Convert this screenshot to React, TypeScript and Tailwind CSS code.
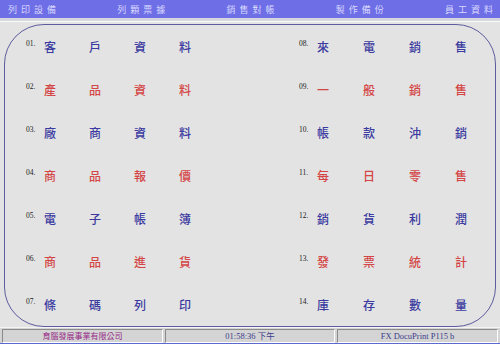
import React from "react";

type Item = { no: string; text: string; red: boolean };

const leftItems: Item[] = [
  { no: "01.", text: "客戶資料", red: false },
  { no: "02.", text: "產品資料", red: true },
  { no: "03.", text: "廠商資料", red: false },
  { no: "04.", text: "商品報價", red: true },
  { no: "05.", text: "電子帳簿", red: false },
  { no: "06.", text: "商品進貨", red: true },
  { no: "07.", text: "條碼列印", red: false },
];

const rightItems: Item[] = [
  { no: "08.", text: "來電銷售", red: false },
  { no: "09.", text: "一般銷售", red: true },
  { no: "10.", text: "帳款沖銷", red: false },
  { no: "11.", text: "每日零售", red: true },
  { no: "12.", text: "銷貨利潤", red: false },
  { no: "13.", text: "發票統計", red: true },
  { no: "14.", text: "庫存數量", red: false },
];

const menu = ["列印設備", "列顆票據", "銷售對帳", "製作備份", "員工資料"];

const cjk = "font-['Noto_Sans_CJK_TC','Noto_Sans_CJK_SC',sans-serif]";

function Entry({ item, gap }: { item: Item; gap: string }) {
  return (
    <div className="flex items-start">
      <span className="w-[18px] font-['Liberation_Serif',serif] text-[7.5px] leading-none text-[#222222]">
        {item.no}
      </span>
      <div className={`flex ${gap}`}>
        {item.text.split("").map((ch, i) => (
          <span
            key={i}
            className={`w-[12px] text-[12px] font-medium leading-[14px] ${cjk} ${
              item.red ? "text-[#d44646]" : "text-[#3a3aa0]"
            }`}
          >
            {ch}
          </span>
        ))}
      </div>
    </div>
  );
}

export default function App() {
  return (
    <div className="flex h-[344px] w-[500px] flex-col overflow-hidden bg-[#e3e3e3]">
      <div className="flex h-[18px] items-center justify-between bg-[#6e6ee6] pl-[8px] pr-[3px]">
        {menu.map((m) => (
          <span
            key={m}
            className={`text-[9px] leading-none tracking-[4px] text-[#d8d8ff] ${cjk}`}
          >
            {m}
          </span>
        ))}
      </div>
      <div className="h-[3px] bg-[#d6d6de]" />
      <div className="h-px bg-[#fafafa]" />

      <div className="px-[4px] pt-[2px]">
        <div className="flex h-[303px] flex-col rounded-[40px] border border-[#5c5c9e]">
          {leftItems.map((item, i) => (
            <div key={item.no} className="flex h-[43px] items-center pt-[1px]">
              <div className="w-[297px] pl-[21px]">
                <Entry item={item} gap="gap-[33px]" />
              </div>
              <div className="-ml-[3px]">
                <Entry item={rightItems[i]} gap="gap-[34px]" />
              </div>
            </div>
          ))}
        </div>
      </div>

      <div className="flex flex-1 flex-col bg-[#d4d4d4]">
        <div className="h-px bg-[#f4f4f4]" />
        <div className="flex flex-1 gap-[2px] px-[2px] pt-[1px]">
          <div className="flex w-[161px] items-center justify-center border border-l-[#8a8a8a] border-t-[#8a8a8a] border-b-white border-r-white">
            <span className={`text-[8px] leading-none text-[#962a86] ${cjk}`}>
              育腦發展事業有限公司
            </span>
          </div>
          <div className="flex w-[170px] items-center justify-center border border-l-[#8a8a8a] border-t-[#8a8a8a] border-b-white border-r-white">
            <span className="font-['Liberation_Serif','Noto_Sans_CJK_TC',serif] text-[8.5px] leading-none text-[#3c3c8c]">
              01:58:36 下午
            </span>
          </div>
          <div className="flex flex-1 items-center justify-center border border-l-[#8a8a8a] border-t-[#8a8a8a] border-b-white border-r-white">
            <span className="font-['Liberation_Serif',serif] text-[8.5px] leading-none text-[#3c3c8c]">
              FX DocuPrint P115 b
            </span>
          </div>
        </div>
        <div className="h-px bg-[#5a6ad0]" />
      </div>
    </div>
  );
}
